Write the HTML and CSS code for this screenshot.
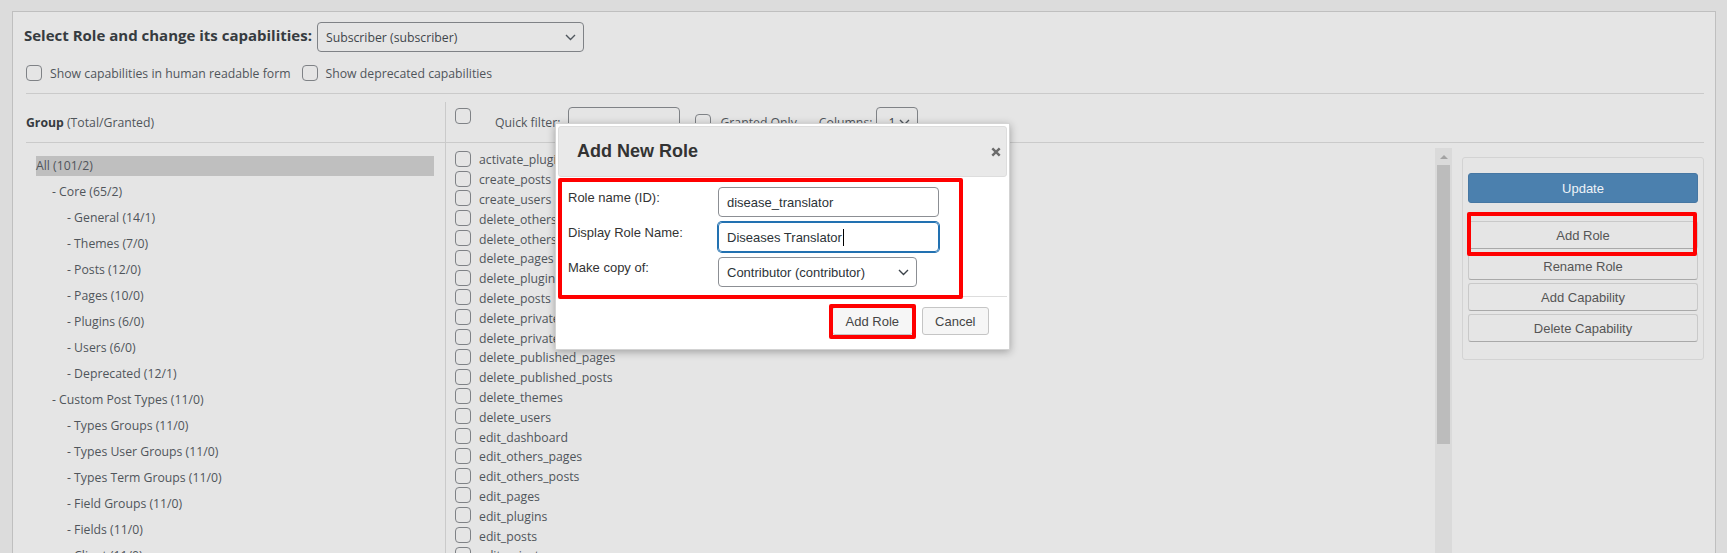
FILE: index.html
```html
<!DOCTYPE html>
<html lang="en">
<head>
<meta charset="utf-8">
<title>User Role Editor</title>
<link rel="stylesheet" href="styles.css">
</head>
<body>
<div class="page">
  <div class="panel">
    <div class="top">
      <div class="title-row">
        <h2 class="title">Select Role and change its capabilities:</h2>
        <div class="select role-select">
          <span>Subscriber (subscriber)</span>
          <svg class="chev" width="11" height="7" viewBox="0 0 11 7"><path d="M1 1l4.5 4.5L10 1" fill="none" stroke="#50575e" stroke-width="1.4"/></svg>
        </div>
      </div>
      <div class="opts">
        <label class="opt"><input type="checkbox" class="cb"><span>Show capabilities in human readable form</span></label>
        <label class="opt"><input type="checkbox" class="cb"><span>Show deprecated capabilities</span></label>
      </div>
    </div>

    <div class="main">
      <div class="groups">
        <div class="col-head group-head"><b>Group</b>&nbsp;(Total/Granted)</div>
        <ul class="group-list">
          <li class="active">All (101/2)</li>
          <li class="l1">- Core (65/2)</li>
          <li class="l2">- General (14/1)</li>
          <li class="l2">- Themes (7/0)</li>
          <li class="l2">- Posts (12/0)</li>
          <li class="l2">- Pages (10/0)</li>
          <li class="l2">- Plugins (6/0)</li>
          <li class="l2">- Users (6/0)</li>
          <li class="l2">- Deprecated (12/1)</li>
          <li class="l1">- Custom Post Types (11/0)</li>
          <li class="l2">- Types Groups (11/0)</li>
          <li class="l2">- Types User Groups (11/0)</li>
          <li class="l2">- Types Term Groups (11/0)</li>
          <li class="l2">- Field Groups (11/0)</li>
          <li class="l2">- Fields (11/0)</li>
          <li class="l2">- Client (11/0)</li>
        </ul>
      </div>

      <div class="caps-col">
        <div class="col-head caps-head">
          <input type="checkbox" class="cb cb-all">
          <span class="qf-label">Quick filter:</span>
          <div class="qf-input"></div>
          <input type="checkbox" class="cb cb-granted">
          <span>Granted Only</span>
          <span class="cols-label">Columns:</span>
          <div class="select cols-select">
            <span>1</span>
            <svg class="chev" width="11" height="7" viewBox="0 0 11 7"><path d="M1 1l4.5 4.5L10 1" fill="none" stroke="#50575e" stroke-width="1.4"/></svg>
          </div>
        </div>

        <div class="caps-body">
          <ul class="caps-list">
            <li><input type="checkbox" class="cb"><span>activate_plugins</span></li>
            <li><input type="checkbox" class="cb"><span>create_posts</span></li>
            <li><input type="checkbox" class="cb"><span>create_users</span></li>
            <li><input type="checkbox" class="cb"><span>delete_others_pages</span></li>
            <li><input type="checkbox" class="cb"><span>delete_others_posts</span></li>
            <li><input type="checkbox" class="cb"><span>delete_pages</span></li>
            <li><input type="checkbox" class="cb"><span>delete_plugins</span></li>
            <li><input type="checkbox" class="cb"><span>delete_posts</span></li>
            <li><input type="checkbox" class="cb"><span>delete_private_pages</span></li>
            <li><input type="checkbox" class="cb"><span>delete_private_posts</span></li>
            <li><input type="checkbox" class="cb"><span>delete_published_pages</span></li>
            <li><input type="checkbox" class="cb"><span>delete_published_posts</span></li>
            <li><input type="checkbox" class="cb"><span>delete_themes</span></li>
            <li><input type="checkbox" class="cb"><span>delete_users</span></li>
            <li><input type="checkbox" class="cb"><span>edit_dashboard</span></li>
            <li><input type="checkbox" class="cb"><span>edit_others_pages</span></li>
            <li><input type="checkbox" class="cb"><span>edit_others_posts</span></li>
            <li><input type="checkbox" class="cb"><span>edit_pages</span></li>
            <li><input type="checkbox" class="cb"><span>edit_plugins</span></li>
            <li><input type="checkbox" class="cb"><span>edit_posts</span></li>
            <li><input type="checkbox" class="cb"><span>edit_private_pages</span></li>
            <li><input type="checkbox" class="cb"><span>edit_private_posts</span></li>
          </ul>
          <div class="scrollbar">
            <div class="sb-arrow"></div>
            <div class="sb-thumb"></div>
          </div>
          <div class="sidebar">
            <div class="side-box">
              <div class="btn btn-update">Update</div>
              <div class="mark-wrap">
                <div class="btn">Add Role</div>
                <div class="mark mark-side"></div>
              </div>
              <div class="btn">Rename Role</div>
              <div class="btn">Add Capability</div>
              <div class="btn">Delete Capability</div>
            </div>
          </div>
        </div>
      </div>
    </div>
  </div>
</div>

<div class="dialog">
  <div class="dlg-title">
    <h3>Add New Role</h3>
    <svg class="dlg-close" width="10" height="10" viewBox="0 0 10 10"><path d="M1.3 1.3l7.4 7.4M8.7 1.3l-7.4 7.4" stroke="#6b6b6b" stroke-width="2.4"/></svg>
  </div>
  <div class="dlg-body">
    <div class="form-grid">
      <label class="f-label">Role name (ID):</label>
      <div class="field">disease_translator</div>
      <label class="f-label">Display Role Name:</label>
      <div class="field field-focus">Diseases Translator<span class="caret"></span></div>
      <label class="f-label">Make copy of:</label>
      <div class="field field-select">
        <span>Contributor (contributor)</span>
        <svg class="chev" width="11" height="7" viewBox="0 0 11 7"><path d="M1 1l4.5 4.5L10 1" fill="none" stroke="#3c434a" stroke-width="1.4"/></svg>
      </div>
    </div>
  </div>
  <div class="dlg-buttons">
    <div class="dbtn">Add Role</div>
    <div class="dbtn">Cancel</div>
  </div>
  <div class="mark mark-form"></div>
  <div class="mark mark-btn"></div>
</div>
</body>
</html>
```

FILE: styles.css
```css
html, body {
  margin: 0;
}
body {
  background: #dcdcdc;
  font-family: "Open Sans", "Noto Sans", sans-serif;
  font-size: 12.25px;
  color: #50555b;
  height: 553px;
  overflow: hidden;
  position: relative;
}

.page {
  padding: 11px 11px 0 12px;
}
.panel {
  background: #e5e5e5;
  border: 1px solid #bfbfbf;
  border-bottom: none;
  padding: 0 11px 0 13px;
  height: 620px;
}

/* top */
.top {
  border-bottom: 1px solid #cacaca;
  padding: 10px 0 12px;
}
.title-row {
  display: flex;
  align-items: flex-start;
  gap: 5px;
  height: 30px;
}
.title {
  margin: 3px 0 0 -2px;
  font-size: 15px;
  font-weight: 700;
  line-height: 20px;
  color: #363b40;
  white-space: nowrap;
}
.select {
  height: 30px;
  box-sizing: border-box;
  border: 1px solid #7f8286;
  border-radius: 4px;
  display: flex;
  align-items: center;
  justify-content: space-between;
  padding: 0 7px 0 8px;
  color: #3f454b;
  flex: none;
}
.role-select {
  width: 267px;
}
.opts {
  display: flex;
  align-items: center;
  margin-top: 13px;
  height: 16px;
}
.opt {
  display: flex;
  align-items: center;
}
.opt + .opt {
  margin-left: 11px;
}
.cb {
  -webkit-appearance: none;
  appearance: none;
  margin: 0 8px 0 0;
  width: 16px;
  height: 16px;
  border: 1px solid #7f8286;
  border-radius: 4px;
  background: transparent;
  box-sizing: border-box;
  flex: none;
}

/* main grid */
.main {
  display: grid;
  grid-template-columns: 419px 1fr;
  padding-top: 8px;
}
.col-head {
  height: 41px;
  box-sizing: border-box;
  border-bottom: 1px solid #cacaca;
  display: flex;
  align-items: center;
  white-space: nowrap;
}
.group-head b {
  color: #363b40;
}
.group-list {
  list-style: none;
  margin: 0;
  padding: 13px 11px 0 10px;
}
.group-list li {
  height: 20px;
  line-height: 20px;
  margin-bottom: 6px;
  white-space: nowrap;
}
.group-list li.active {
  background: #bfbfbf;
}
.group-list .l1 {
  padding-left: 16px;
}
.group-list .l2 {
  padding-left: 31px;
}

/* caps column */
.caps-col {
  border-left: 1px solid #cacaca;
  min-width: 0;
}
.caps-head {
  padding-left: 9px;
}
.caps-head .cb-all {
  align-self: flex-start;
  margin-top: 6px;
  margin-right: 24px;
}
.qf-input {
  width: 112px;
  height: 30px;
  box-sizing: border-box;
  border: 1px solid #7f8286;
  border-radius: 4px;
  margin-left: 8px;
}
.caps-head .cb-granted {
  margin-left: 15px;
  margin-right: 9px;
}
.cols-label {
  margin-left: 22px;
}
.cols-select {
  width: 42px;
  margin-left: 4px;
  padding: 0 7px 0 11px;
}

.caps-body {
  display: flex;
  padding-top: 5px;
}
.caps-list {
  flex: 1;
  list-style: none;
  margin: 0;
  padding: 2px 0 0 9px;
}
.caps-list li {
  height: 19.8px;
  display: flex;
  align-items: center;
  white-space: nowrap;
}
.caps-list .cb {
  margin-top: -2px;
}
.scrollbar {
  width: 17px;
  flex: none;
  background: #dadada;
  display: flex;
  flex-direction: column;
  align-items: center;
}
.sb-arrow {
  width: 0;
  height: 0;
  border-left: 4px solid transparent;
  border-right: 4px solid transparent;
  border-bottom: 4px solid #a3a3a3;
  margin-top: 7px;
}
.sb-thumb {
  width: 13px;
  height: 279px;
  background: #bcbcbc;
  margin-top: 6px;
}
.sidebar {
  width: 242px;
  margin-left: 10px;
  flex: none;
}
.side-box {
  margin-top: 9px;
  border: 1px solid #d3d3d3;
  border-radius: 3px;
  padding: 15px 5px 17px;
}
.btn {
  font-family: "Liberation Sans", Arial, sans-serif;
  font-size: 13px;
  height: 28px;
  box-sizing: border-box;
  display: flex;
  align-items: center;
  justify-content: center;
  border: 1px solid #c9c9c9;
  border-bottom-color: #a9a9a9;
  border-radius: 3px;
  color: #555;
  background: #e5e5e5;
}
.btn + .btn,
.mark-wrap + .btn,
.btn + .mark-wrap {
  margin-top: 3px;
}
.btn-update {
  height: 30px;
  background: #4b80ae;
  border-color: #4677a3;
  color: #eef3f8;
}
.btn-update + .mark-wrap {
  margin-top: 18px;
}
.mark-wrap {
  position: relative;
}
.mark {
  position: absolute;
  box-sizing: border-box;
  border: 4px solid #ff0000;
  border-radius: 2px;
  pointer-events: none;
}
.mark-side {
  left: -1px;
  top: -9px;
  width: 230px;
  height: 44px;
}

/* dialog */
.dialog {
  position: absolute;
  left: 555px;
  top: 123px;
  width: 455px;
  height: 227px;
  box-sizing: border-box;
  border: 1px solid #d3d3d3;
  padding: 2px;
  background: #fff;
  box-shadow: 0 2px 8px rgba(0, 0, 0, 0.3);
  font-family: "Liberation Sans", Arial, sans-serif;
  font-size: 13px;
  color: #333;
}
.dlg-title {
  height: 51px;
  box-sizing: border-box;
  border: 1px solid #dddddd;
  background: #e9e9e9;
  border-radius: 3px;
  display: flex;
  align-items: center;
  justify-content: space-between;
  padding: 0 5px 0 18px;
}
.dlg-title h3 {
  margin: 0;
  font-size: 18px;
  font-weight: bold;
  color: #333;
}
.dlg-body {
  padding: 10px 0 9px 10px;
}
.form-grid {
  display: grid;
  grid-template-columns: 150px auto;
  row-gap: 5px;
  justify-items: start;
}
.f-label {
  padding-top: 3px;
  line-height: 15px;
  color: #333;
}
.field {
  width: 221px;
  height: 30px;
  box-sizing: border-box;
  border: 1px solid #8c8f94;
  border-radius: 4px;
  padding: 0 8px;
  display: flex;
  align-items: center;
  color: #2c3338;
}
.field-focus {
  border-color: #2271b1;
  box-shadow: 0 0 0 1px #2271b1;
}
.caret {
  display: inline-block;
  width: 1px;
  height: 17px;
  background: #000;
  margin-left: 1px;
}
.field-select {
  width: 199px;
  justify-content: space-between;
  padding-right: 7px;
}
.dlg-buttons {
  border-top: 1px solid #dddddd;
  display: flex;
  justify-content: flex-end;
  gap: 9px;
  padding: 10px 18px 0;
}
.dbtn {
  height: 28px;
  box-sizing: border-box;
  padding: 0 12.5px;
  border: 1px solid #c5c5c5;
  border-radius: 3px;
  background: #f6f6f6;
  color: #454545;
  display: flex;
  align-items: center;
}
.mark-form {
  left: 2px;
  top: 54px;
  width: 405px;
  height: 121px;
}
.mark-btn {
  left: 273px;
  top: 180px;
  width: 87px;
  height: 35px;
}
```
